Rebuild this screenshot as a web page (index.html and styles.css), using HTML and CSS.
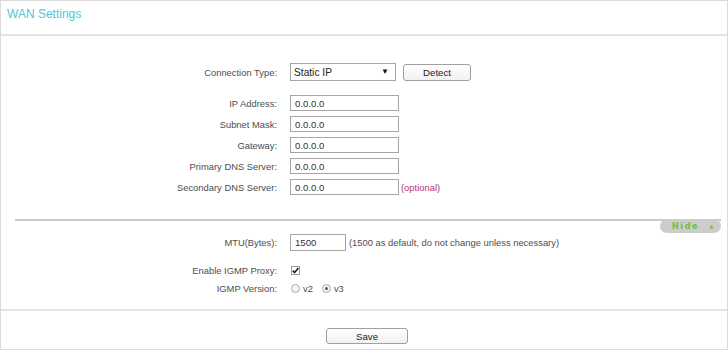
FILE: index.html
```html
<!DOCTYPE html>
<html lang="en">

<head>
    <meta charset="UTF-8">
    <title>WAN Settings</title>
    <link rel="stylesheet" href="styles.css">
</head>

<body>
    <div class="panel">
        <div class="panel-head">
            <h1>WAN Settings</h1>
        </div>

        <form class="panel-body">
            <div class="row row-type">
                <label>Connection Type:</label>
                <div class="field">
                    <span class="select-wrap">
                        <select name="conn_type">
                            <option>Static IP</option>
                            <option>Dynamic IP</option>
                            <option>PPPoE</option>
                        </select>
                    </span>
                    <button type="button" class="btn btn-detect">Detect</button>
                </div>
            </div>

            <div class="ip-group">
                <div class="row">
                    <label>IP Address:</label>
                    <div class="field"><input type="text" class="text-in" value="0.0.0.0"></div>
                </div>
                <div class="row">
                    <label>Subnet Mask:</label>
                    <div class="field"><input type="text" class="text-in" value="0.0.0.0"></div>
                </div>
                <div class="row">
                    <label>Gateway:</label>
                    <div class="field"><input type="text" class="text-in" value="0.0.0.0"></div>
                </div>
                <div class="row">
                    <label>Primary DNS Server:</label>
                    <div class="field"><input type="text" class="text-in" value="0.0.0.0"></div>
                </div>
                <div class="row">
                    <label>Secondary DNS Server:</label>
                    <div class="field">
                        <input type="text" class="text-in" value="0.0.0.0">
                        <span class="optional">(optional)</span>
                    </div>
                </div>
            </div>

            <div class="adv-bar">
                <button type="button" class="hide-btn">Hide <span class="arrow">&#9650;</span></button>
            </div>

            <div class="row row-mtu">
                <label>MTU(Bytes):</label>
                <div class="field">
                    <input type="text" class="text-in mtu-in" value="1500">
                    <span class="note">(1500 as default, do not change unless necessary)</span>
                </div>
            </div>

            <div class="row row-small row-igmp">
                <label>Enable IGMP Proxy:</label>
                <div class="field">
                    <span class="check">
                        <svg width="9" height="9" viewBox="0 0 9 9"><path d="M1.8 4.6 L3.6 6.6 L7.4 2" fill="none" stroke="#222" stroke-width="1.6"/></svg>
                    </span>
                </div>
            </div>

            <div class="row row-small row-ver">
                <label>IGMP Version:</label>
                <div class="field">
                    <span class="radio"></span><span class="radio-text">v2</span>
                    <span class="radio on"></span><span class="radio-text">v3</span>
                </div>
            </div>
        </form>

        <div class="panel-foot">
            <button type="button" class="btn btn-save">Save</button>
        </div>
    </div>
</body>

</html>
```

FILE: styles.css
```css
* {
    box-sizing: border-box;
}

body {
    margin: 0;
    font-family: "Liberation Sans", Arial, sans-serif;
    font-size: 9.4px;
    color: #4d4d4d;
    background: #fff;
}

.panel {
    width: 728px;
    height: 350px;
    border: 1px solid #dcdcdc;
    display: flex;
    flex-direction: column;
}

.panel-head {
    height: 35px;
    border-bottom: 2px solid #e4e4e4;
}

.panel-head h1 {
    margin: 0;
    padding: 6px 0 0 6px;
    font-size: 12px;
    line-height: 14px;
    font-weight: normal;
    color: #4dc6d6;
}

.panel-body {
    flex: 1;
    margin: 0;
    padding-top: 27px;
}

.row {
    display: flex;
    align-items: center;
    height: 16px;
}

.row label {
    width: 276px;
    text-align: right;
}

.row .field {
    margin-left: 13px;
    display: flex;
    align-items: center;
}

.row-type {
    height: 18px;
}

.ip-group {
    margin-top: 14px;
    display: flex;
    flex-direction: column;
    gap: 5px;
}

.text-in {
    width: 109px;
    height: 16px;
    border: 1px solid #a6a6a6;
    padding: 0 4px;
    font-family: inherit;
    font-size: 9.6px;
    color: #333;
    outline: none;
}

.select-wrap {
    position: relative;
    display: inline-block;
}

.select-wrap select {
    appearance: none;
    -webkit-appearance: none;
    width: 106px;
    height: 18px;
    border: 1px solid #a6a6a6;
    border-radius: 0;
    background: #fff;
    padding: 0 0 0 3px;
    font-family: inherit;
    font-size: 10.2px;
    color: #222;
    outline: none;
}

.select-wrap::after {
    content: "\25BC";
    position: absolute;
    right: 7px;
    top: 4px;
    font-size: 8px;
    color: #111;
    pointer-events: none;
}

.btn {
    font-family: inherit;
    font-size: 9.7px;
    color: #222;
    border: 1px solid #a0a0a0;
    border-radius: 3px;
    background: linear-gradient(#ffffff, #f1f1f1);
    padding: 0;
    cursor: pointer;
}

.btn-detect {
    width: 68px;
    height: 17px;
    margin-left: 7px;
}

.optional {
    margin-left: 2px;
    color: #b8336a;
}

.adv-bar {
    position: relative;
    margin: 24px 6px 0 14px;
    border-top: 2px solid #cbcbcb;
    height: 0;
}

.hide-btn {
    position: absolute;
    right: 0;
    top: -2px;
    width: 61px;
    height: 14px;
    border: none;
    border-radius: 7px;
    background: #cccccc;
    color: #72bd3a;
    font-family: "DejaVu Sans", sans-serif;
    font-size: 8px;
    font-weight: bold;
    letter-spacing: 1.6px;
    padding: 0 0 0 12px;
    text-align: left;
    cursor: pointer;
}

.hide-btn .arrow {
    font-size: 5px;
    margin-left: 6px;
    vertical-align: 1px;
}

.row-mtu {
    margin-top: 13px;
    height: 17px;
}

.mtu-in {
    width: 56px;
    height: 17px;
}

.note {
    margin-left: 3px;
}

.row-small {
    height: 12px;
}

.row-igmp {
    margin-top: 13px;
}

.row-ver {
    margin-top: 6px;
}

.check {
    width: 9px;
    height: 9px;
    margin-left: 1px;
    border: 1px solid #9a9a9a;
    background: #fff;
    display: flex;
    align-items: center;
    justify-content: center;
}

.check svg {
    display: block;
    flex: none;
}

.radio {
    width: 9px;
    height: 9px;
    margin-left: 1px;
    border: 1px solid #aaa;
    border-radius: 50%;
    background: #f4f4f4;
    display: inline-block;
    position: relative;
}

.radio.on::after {
    content: "";
    position: absolute;
    left: 2px;
    top: 2px;
    width: 3px;
    height: 3px;
    border-radius: 50%;
    background: #555;
}

.radio-text {
    margin-left: 3px;
    margin-right: 8px;
}

.panel-foot {
    height: 40px;
    border-top: 2px solid #e4e4e4;
    display: flex;
    justify-content: center;
    align-items: flex-start;
    padding: 17px 0 0 6px;
}

.btn-save {
    width: 82px;
    height: 16px;
}
```
